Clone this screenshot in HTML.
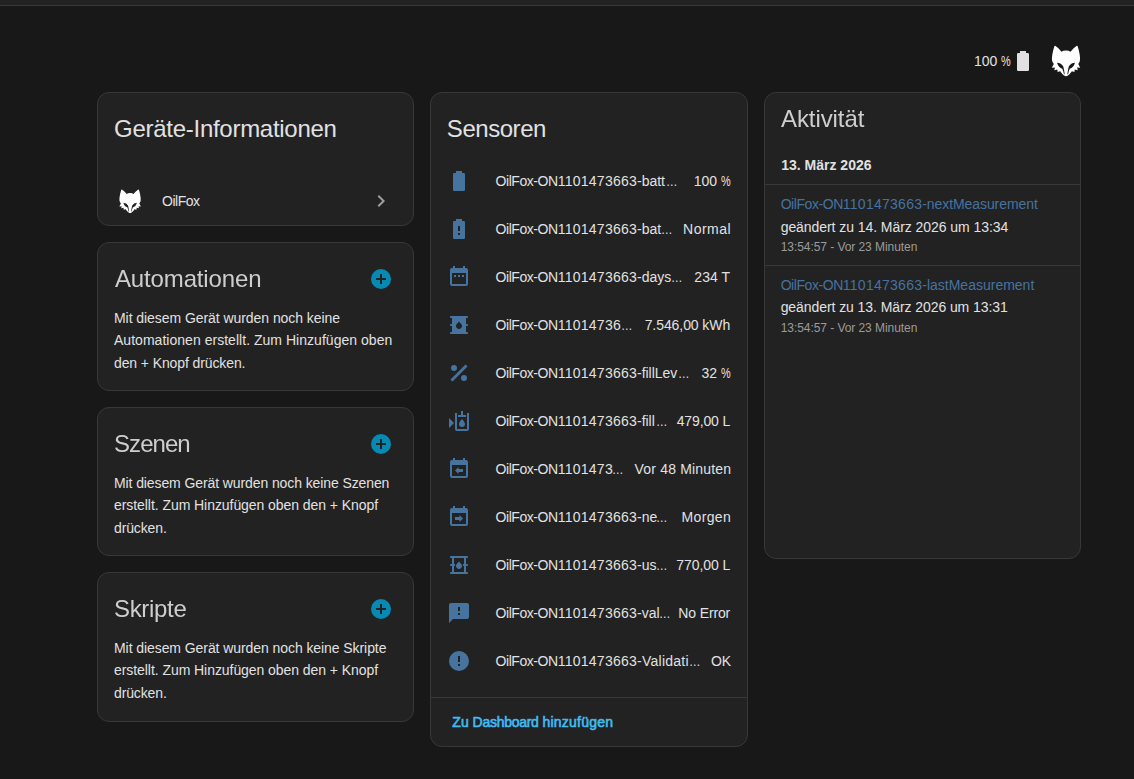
<!DOCTYPE html>
<html lang="de">
<head>
<meta charset="utf-8">
<title>OilFox – Gerät</title>
<style>
html,body{margin:0;padding:0;}
body{width:1134px;height:779px;overflow:hidden;background:#181818;color:#e1e1e1;
  font-family:"Liberation Sans",sans-serif;font-size:14px;position:relative;
  -webkit-font-smoothing:antialiased;}
.topbar{position:absolute;left:0;top:0;width:1134px;height:5px;background:#222222;border-bottom:1px solid #383838;}
.card{position:absolute;box-sizing:border-box;background:#222222;border:1px solid #383838;border-radius:12px;}
.t{position:absolute;white-space:nowrap;line-height:20px;margin:0;}
.h{position:absolute;white-space:nowrap;font-size:24px;line-height:32px;margin:0;font-weight:400;}
.dim{color:#cecece;will-change:transform;}
.ic{position:absolute;width:24px;height:24px;display:block;}
.st{fill:#46749f;}
.lnk{color:#4573a1;}
.sec{color:#9b9b9b;font-size:12px;}
.div{position:absolute;left:0;right:0;height:1px;background:#383838;}
.row{position:absolute;left:0;right:0;height:48px;}
.pc{display:inline-block;transform:scaleX(.78);transform-origin:0 50%;margin-right:-2.74px;}
.el{display:inline-block;transform:scaleX(.82);transform-origin:0 50%;margin-right:-2.5px;}
.pf{letter-spacing:-0.44px;}
.dg{letter-spacing:0.26px;}
.val{position:absolute;white-space:nowrap;line-height:20px;right:16px;text-align:right;}
</style>
</head>
<body>
<div class="topbar"></div>

<!-- header -->
<div class="t" id="hb" style="left:974px;top:51px;">100 <span class="pc">%</span></div>
<svg class="ic" style="left:1011px;top:49px;" viewBox="0 0 24 24"><path fill="#e1e1e1" d="M16.67,4H15V2H9V4H7.33A1.33,1.33 0 0,0 6,5.33V20.67C6,21.4 6.6,22 7.33,22H16.67A1.33,1.33 0 0,0 18,20.67V5.33C18,4.6 17.4,4 16.67,4Z"/></svg>

<svg id="foxbig" style="position:absolute;left:1050px;top:44px;width:32px;height:34px;" viewBox="0 0 733 779"><path id="foxp" fill="#ffffff" fill-rule="evenodd" d="M367,150Q427,148 470,176Q537,90 615,42Q629,36 635,56C667,150 705,320 681,400Q667,432 647,456L693,546L622,540L635,600L567,585L559,640L502,625Q457,690 412,724Q387,740 367,740Q347,740 322,724Q277,690 232,625L175,640L167,585L99,600L112,540L41,546L87,456Q67,432 53,400C29,320 67,150 99,56Q105,36 119,42Q197,90 264,176Q307,148 367,150ZM573,432Q477,434 430,518Q409,600 397,695L414,695Q424,622 453,568Q535,552 573,432ZM161,432Q257,434 304,518Q325,600 337,695L320,695Q310,622 281,568Q199,552 161,432Z"/></svg>

<!-- left column -->
<div class="card" id="c1" style="left:97px;top:92px;width:317.33px;height:134px;">
  <h1 class="h" id="h1" style="left:16.1px;top:19.8px;letter-spacing:-0.279px;">Geräte-Informationen</h1>
  <svg id="foxsm" style="position:absolute;left:19.93px;top:94.8px;width:24.2px;height:26.4px;" preserveAspectRatio="none" viewBox="0 0 733 779"><path fill="#ffffff" fill-rule="evenodd" d="M367,150Q427,148 470,176Q537,90 615,42Q629,36 635,56C667,150 705,320 681,400Q667,432 647,456L693,546L622,540L635,600L567,585L559,640L502,625Q457,690 412,724Q387,740 367,740Q347,740 322,724Q277,690 232,625L175,640L167,585L99,600L112,540L41,546L87,456Q67,432 53,400C29,320 67,150 99,56Q105,36 119,42Q197,90 264,176Q307,148 367,150ZM573,432Q477,434 430,518Q409,600 397,695L414,695Q424,622 453,568Q535,552 573,432ZM161,432Q257,434 304,518Q325,600 337,695L320,695Q310,622 281,568Q199,552 161,432Z"/></svg>
  <div class="t" id="oilfox" style="left:64.0px;top:98px;letter-spacing:-0.48px;">OilFox</div>
  <svg class="ic" style="left:271px;top:96px;" viewBox="0 0 24 24"><path fill="#9e9e9e" d="M8.59,16.58L13.17,12L8.59,7.41L10,6L16,12L10,18L8.59,16.58Z"/></svg>
</div>

<div class="card" id="c2" style="left:97px;top:242px;width:317.33px;height:149px;">
  <h1 class="h dim" id="h2" style="left:16.7px;top:19.8px;letter-spacing:-0.145px;">Automationen</h1>
  <svg class="ic" style="left:271px;top:24px;" viewBox="0 0 24 24"><path fill="#0689b3" d="M17,13H13V17H11V13H7V11H11V7H13V11H17M12,2A10,10 0 0,0 2,12A10,10 0 0,0 12,22A10,10 0 0,0 22,12A10,10 0 0,0 12,2Z"/></svg>
  <div class="t p" id="p2a" style="left:16.0px;top:64.5px;letter-spacing:-0.058px;">Mit diesem Gerät wurden noch keine</div>
  <div class="t p" id="p2b" style="left:16.0px;top:87.0px;letter-spacing:0.029px;">Automationen erstellt. Zum Hinzufügen oben</div>
  <div class="t p" id="p2c" style="left:16.0px;top:109.5px;letter-spacing:-0.105px;">den + Knopf drücken.</div>
</div>

<div class="card" id="c3" style="left:97px;top:407px;width:317.33px;height:149px;">
  <h1 class="h dim" id="h3" style="left:15.5px;top:19.8px;letter-spacing:-0.94px;">Szenen</h1>
  <svg class="ic" style="left:271px;top:24px;" viewBox="0 0 24 24"><path fill="#0689b3" d="M17,13H13V17H11V13H7V11H11V7H13V11H17M12,2A10,10 0 0,0 2,12A10,10 0 0,0 12,22A10,10 0 0,0 22,12A10,10 0 0,0 12,2Z"/></svg>
  <div class="t p" id="p3a" style="left:16.0px;top:64.5px;letter-spacing:-0.1px;">Mit diesem Gerät wurden noch keine Szenen</div>
  <div class="t p" id="p3b" style="left:16.0px;top:87.0px;letter-spacing:-0.06px;">erstellt. Zum Hinzufügen oben den + Knopf</div>
  <div class="t p" id="p3c" style="left:16.0px;top:109.5px;letter-spacing:-0.129px;">drücken.</div>
</div>

<div class="card" id="c4" style="left:97px;top:572px;width:317.33px;height:150px;">
  <h1 class="h dim" id="h4" style="left:15.5px;top:19.8px;letter-spacing:-0.317px;">Skripte</h1>
  <svg class="ic" style="left:271px;top:24px;" viewBox="0 0 24 24"><path fill="#0689b3" d="M17,13H13V17H11V13H7V11H11V7H13V11H17M12,2A10,10 0 0,0 2,12A10,10 0 0,0 12,22A10,10 0 0,0 22,12A10,10 0 0,0 12,2Z"/></svg>
  <div class="t p" id="p4a" style="left:16.0px;top:64.5px;letter-spacing:-0.073px;">Mit diesem Gerät wurden noch keine Skripte</div>
  <div class="t p" id="p4b" style="left:16.0px;top:87.0px;letter-spacing:-0.06px;">erstellt. Zum Hinzufügen oben den + Knopf</div>
  <div class="t p" id="p4c" style="left:16.0px;top:109.5px;letter-spacing:-0.129px;">drücken.</div>
</div>

<!-- middle column -->
<div class="card" id="c5" style="left:430.33px;top:92px;width:317.33px;height:655px;">
  <h1 class="h" id="h5" style="left:15.5px;top:19.8px;letter-spacing:-0.457px;">Sensoren</h1>
<!--ROWS-->
  <div class="row" style="top:64px;">
    <svg class="ic st" style="left:16px;top:12px;" viewBox="0 0 24 24"><path fill-rule="evenodd" d="M16.67,4H15V2H9V4H7.33A1.33,1.33 0 0,0 6,5.33V20.67C6,21.4 6.6,22 7.33,22H16.67A1.33,1.33 0 0,0 18,20.67V5.33C18,4.6 17.4,4 16.67,4Z"/></svg>
    <div class="t nm" id="n1" style="left:64.2px;top:14px;letter-spacing:-0.05px;"><span class="pf">OilFox-ON</span><span class="dg">1101473663</span>-batt<span class="el" style="margin-left:0.9px">…</span></div>
    <div class="val" id="v1" style="top:14px;">100 <span class="pc">%</span></div>
  </div>
  <div class="row" style="top:112px;">
    <svg class="ic st" style="left:16px;top:12px;" viewBox="0 0 24 24"><path fill-rule="evenodd" d="M13,14H11V9H13M13,18H11V16H13M16.67,4H15V2H9V4H7.33A1.33,1.33 0 0,0 6,5.33V20.67C6,21.4 6.6,22 7.33,22H16.67A1.33,1.33 0 0,0 18,20.67V5.33C18,4.6 17.4,4 16.67,4Z"/></svg>
    <div class="t nm" id="n2" style="left:64.2px;top:14px;letter-spacing:-0.05px;"><span class="pf">OilFox-ON</span><span class="dg">1101473663</span>-bat<span class="el">…</span></div>
    <div class="val" id="v2" style="top:14px;letter-spacing:0.5px;right:15.5px;">Normal</div>
  </div>
  <div class="row" style="top:160px;">
    <svg class="ic st" style="left:16px;top:12px;" viewBox="0 0 24 24"><path fill-rule="evenodd" d="M9,10H7V12H9V10M13,10H11V12H13V10M17,10H15V12H17V10M19,3H18V1H16V3H8V1H6V3H5C3.89,3 3,3.9 3,5V19A2,2 0 0,0 5,21H19A2,2 0 0,0 21,19V5A2,2 0 0,0 19,3M19,19H5V8H19V19Z"/></svg>
    <div class="t nm" id="n3" style="left:64.2px;top:14px;letter-spacing:-0.05px;"><span class="pf">OilFox-ON</span><span class="dg">1101473663</span>-days<span class="el">…</span></div>
    <div class="val" id="v3" style="top:14px;letter-spacing:0.05px;right:16.5px;">234 T</div>
  </div>
  <div class="row" style="top:208px;">
    <svg class="ic st" style="left:16px;top:12px;" viewBox="0 0 24 24"><path fill-rule="evenodd" d="M20 13C20.55 13 21 12.55 21 12S20.55 11 20 11H19V5H20C20.55 5 21 4.55 21 4S20.55 3 20 3H4C3.45 3 3 3.45 3 4S3.45 5 4 5H5V11H4C3.45 11 3 11.45 3 12S3.45 13 4 13H5V19H4C3.45 19 3 19.45 3 20S3.45 21 4 21H20C20.55 21 21 20.55 21 20S20.55 19 20 19H19V13H20M12 16C10.34 16 9 14.68 9 13.05C9 11.75 9.5 11.38 12 8.5C14.47 11.36 15 11.74 15 13.05C15 14.68 13.66 16 12 16Z"/></svg>
    <div class="t nm" id="n4" style="left:64.2px;top:14px;letter-spacing:-0.05px;"><span class="pf">OilFox-ON</span><span class="dg">11014736</span><span class="el">…</span></div>
    <div class="val" id="v4" style="top:14px;letter-spacing:-0.073px;right:16.5px;">7.546,00 kWh</div>
  </div>
  <div class="row" style="top:256px;">
    <svg class="ic st" style="left:16px;top:12px;" viewBox="0 0 24 24"><path fill-rule="evenodd" d="M18.5,3.5L3.5,18.5L5.5,20.5L20.5,5.5M7,4A3,3 0 0,0 4,7A3,3 0 0,0 7,10A3,3 0 0,0 10,7A3,3 0 0,0 7,4M17,14A3,3 0 0,0 14,17A3,3 0 0,0 17,20A3,3 0 0,0 20,17A3,3 0 0,0 17,14Z"/></svg>
    <div class="t nm" id="n5" style="left:64.2px;top:14px;letter-spacing:-0.05px;"><span class="pf">OilFox-ON</span><span class="dg">1101473663</span>-fillLev<span class="el" style="margin-left:1.3px">…</span></div>
    <div class="val" id="v5" style="top:14px;">32 <span class="pc">%</span></div>
  </div>
  <div class="row" style="top:304px;">
    <svg class="ic st" style="left:16px;top:12px;" viewBox="0 0 24 24"><path fill-rule="evenodd" d="M2,9L7,14L2,19Z M8,4H10V20H20V4H22V20A2,2 0 0,1 20,22H10A2,2 0 0,1 8,20Z M14,2H16V6H19V8H11V6H14Z M15,10C15,10 18,13.2 18,15.1A3,3 0 0,1 15,18A3,3 0 0,1 12,15.1C12,13.2 15,10 15,10Z"/></svg>
    <div class="t nm" id="n6" style="left:64.2px;top:14px;letter-spacing:-0.05px;"><span class="pf">OilFox-ON</span><span class="dg">1101473663</span>-fill<span class="el" style="margin-left:1.3px">…</span></div>
    <div class="val" id="v6" style="top:14px;letter-spacing:-0.129px;right:16.5px;">479,00 L</div>
  </div>
  <div class="row" style="top:352px;">
    <svg class="ic st" style="left:16px;top:12px;" viewBox="0 0 24 24"><path fill-rule="evenodd" d="M19,3H18V1H16V3H8V1H6V3H5A2,2 0 0,0 3,5V19A2,2 0 0,0 5,21H19A2,2 0 0,0 21,19V5A2,2 0 0,0 19,3M19,19H5V8H19V19M8,13.5L11.5,10V12H16V15H11.5V17L8,13.5Z"/></svg>
    <div class="t nm" id="n7" style="left:64.2px;top:14px;letter-spacing:-0.05px;"><span class="pf">OilFox-ON</span><span class="dg">1101473</span><span class="el" style="margin-left:-0.7px">…</span></div>
    <div class="val" id="v7" style="top:14px;letter-spacing:0.169px;right:15.5px;">Vor 48 Minuten</div>
  </div>
  <div class="row" style="top:400px;">
    <svg class="ic st" style="left:16px;top:12px;" viewBox="0 0 24 24"><path fill-rule="evenodd" d="M19,3H18V1H16V3H8V1H6V3H5A2,2 0 0,0 3,5V19A2,2 0 0,0 5,21H19A2,2 0 0,0 21,19V5A2,2 0 0,0 19,3M19,19H5V8H19V19M16,13.5L12.5,10V12H8V15H12.5V17L16,13.5Z"/></svg>
    <div class="t nm" id="n8" style="left:64.2px;top:14px;letter-spacing:-0.05px;"><span class="pf">OilFox-ON</span><span class="dg">1101473663</span>-ne<span class="el" style="margin-left:-0.9px">…</span></div>
    <div class="val" id="v8" style="top:14px;letter-spacing:0.36px;right:15.5px;">Morgen</div>
  </div>
  <div class="row" style="top:448px;">
    <svg class="ic st" style="left:16px;top:12px;" viewBox="0 0 24 24"><path fill-rule="evenodd" d="M20 13C20.55 13 21 12.55 21 12S20.55 11 20 11H19V5H20C20.55 5 21 4.55 21 4S20.55 3 20 3H4C3.45 3 3 3.45 3 4S3.45 5 4 5H5V11H4C3.45 11 3 11.45 3 12S3.45 13 4 13H5V19H4C3.45 19 3 19.45 3 20S3.45 21 4 21H20C20.55 21 21 20.55 21 20S20.55 19 20 19H19V13H20M17 11H16.5C16 11 15.9 11.45 15.9 12S16 13 16.5 13H17V19H7V13H7.5C8 13 8.1 12.55 8.1 12S8 11 7.5 11H7V5H17V11M12 16C10.34 16 9 14.68 9 13.05C9 11.75 9.5 11.38 12 8.5C14.47 11.36 15 11.74 15 13.05C15 14.68 13.66 16 12 16Z"/></svg>
    <div class="t nm" id="n9" style="left:64.2px;top:14px;letter-spacing:-0.05px;"><span class="pf">OilFox-ON</span><span class="dg">1101473663</span>-us<span class="el">…</span></div>
    <div class="val" id="v9" style="top:14px;letter-spacing:-0.086px;right:16.5px;">770,00 L</div>
  </div>
  <div class="row" style="top:496px;">
    <svg class="ic st" style="left:16px;top:12px;" viewBox="0 0 24 24"><path fill-rule="evenodd" d="M13,10H11V6H13M13,14H11V12H13M20,2H4A2,2 0 0,0 2,4V22L6,18H20A2,2 0 0,0 22,16V4C22,2.89 21.1,2 20,2Z"/></svg>
    <div class="t nm" id="n10" style="left:64.2px;top:14px;letter-spacing:-0.05px;"><span class="pf">OilFox-ON</span><span class="dg">1101473663</span>-val<span class="el" style="margin-left:-0.4px">…</span></div>
    <div class="val" id="v10" style="top:14px;letter-spacing:-0.129px;right:16.5px;">No Error</div>
  </div>
  <div class="row" style="top:544px;">
    <svg class="ic st" style="left:16px;top:12px;" viewBox="0 0 24 24"><path fill-rule="evenodd" d="M13,13H11V7H13M13,17H11V15H13M12,2A10,10 0 0,0 2,12A10,10 0 0,0 12,22A10,10 0 0,0 22,12A10,10 0 0,0 12,2Z"/></svg>
    <div class="t nm" id="n11" style="left:64.2px;top:14px;letter-spacing:-0.05px;"><span class="pf">OilFox-ON</span><span class="dg">1101473663</span><span style="letter-spacing:0.23px">-Validati</span><span class="el">…</span></div>
    <div class="val" id="v11" style="top:14px;right:15.5px;">OK</div>
  </div>
<!--/ROWS-->
  <div class="div" style="top:604px;"></div>
  <div class="t" id="add" style="left:21px;top:619px;color:#40bcf4;-webkit-text-stroke:0.6px #40bcf4;">Zu <span style="letter-spacing:-0.27px">Dashboard</span> <span style="letter-spacing:0.22px">hinzufügen</span></div>
</div>

<!-- right column -->
<div class="card" id="c6" style="left:763.67px;top:92px;width:317.33px;height:467px;">
  <h1 class="h dim" id="h6" style="left:16.7px;top:9.8px;letter-spacing:-0.087px;">Aktivität</h1>
  <div class="t" id="date" style="left:16.5px;top:62px;font-weight:bold;letter-spacing:0.008px;">13. März 2026</div>
  <div class="div" style="top:91px;"></div>
  <div class="t lnk" id="e1a" style="left:16px;top:101px;"><span class="pf">OilFox-ON</span><span class="dg">1101473663</span><span id="e1s" style="letter-spacing:-0.08px">-nextMeasurement</span></div>
  <div class="t" id="e1b" style="left:16.0px;top:123.5px;letter-spacing:-0.061px;">geändert zu 14. März 2026 um 13:34</div>
  <div class="t sec" id="e1c" style="left:16.0px;top:144px;letter-spacing:-0.058px;">13:54:57 - Vor 23 Minuten</div>
  <div class="div" style="top:172px;"></div>
  <div class="t lnk" id="e2a" style="left:16px;top:182px;"><span class="pf">OilFox-ON</span><span class="dg">1101473663</span><span id="e2s">-lastMeasurement</span></div>
  <div class="t" id="e2b" style="left:16.0px;top:204.4px;letter-spacing:-0.076px;">geändert zu 13. März 2026 um 13:31</div>
  <div class="t sec" id="e2c" style="left:16.0px;top:225px;letter-spacing:-0.058px;">13:54:57 - Vor 23 Minuten</div>
</div>

</body>
</html>
